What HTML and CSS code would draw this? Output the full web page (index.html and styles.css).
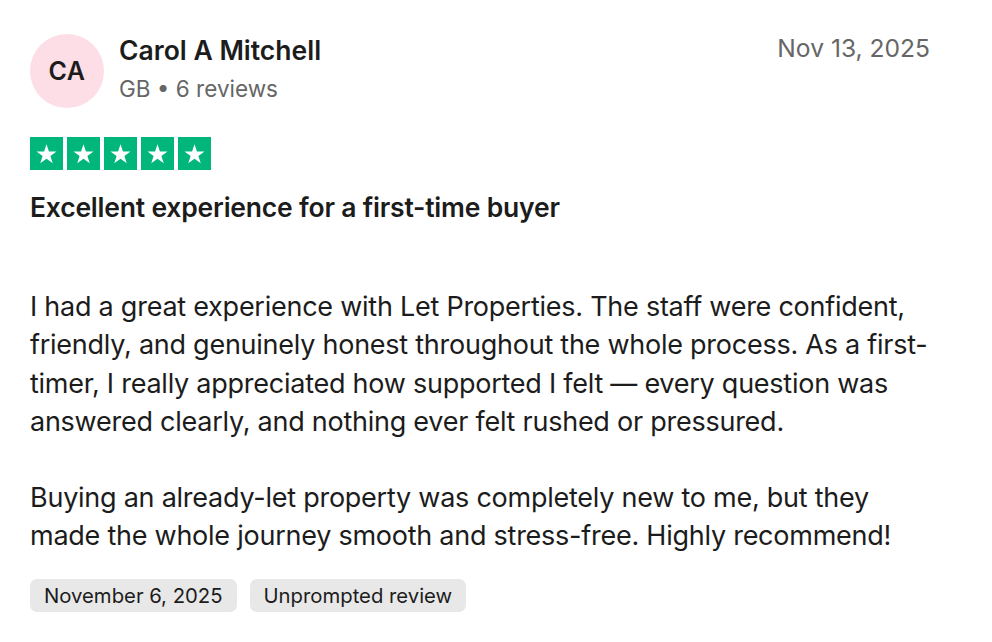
FILE: index.html
```html
<!DOCTYPE html>
<html lang="en">
<head>
<meta charset="utf-8">
<link rel="stylesheet" href="styles.css">
</head>
<body>
<article class="review">
  <header class="head">
    <div class="author">
      <div class="avatar">CA</div>
      <div class="meta">
        <div class="name">Carol A Mitchell</div>
        <div class="sub">GB • 6 reviews</div>
      </div>
    </div>
    <div class="date">Nov 13, 2025</div>
  </header>
  <div class="stars">
    <span class="star"><svg viewBox="0 0 24 24"><path d="M12 3.2l2.35 6.9h7.3l-5.9 4.3 2.25 6.9L12 17l-5.99 4.3 2.25-6.9-5.9-4.3h7.3z" fill="#fff"/></svg></span>
    <span class="star"><svg viewBox="0 0 24 24"><path d="M12 3.2l2.35 6.9h7.3l-5.9 4.3 2.25 6.9L12 17l-5.99 4.3 2.25-6.9-5.9-4.3h7.3z" fill="#fff"/></svg></span>
    <span class="star"><svg viewBox="0 0 24 24"><path d="M12 3.2l2.35 6.9h7.3l-5.9 4.3 2.25 6.9L12 17l-5.99 4.3 2.25-6.9-5.9-4.3h7.3z" fill="#fff"/></svg></span>
    <span class="star"><svg viewBox="0 0 24 24"><path d="M12 3.2l2.35 6.9h7.3l-5.9 4.3 2.25 6.9L12 17l-5.99 4.3 2.25-6.9-5.9-4.3h7.3z" fill="#fff"/></svg></span>
    <span class="star"><svg viewBox="0 0 24 24"><path d="M12 3.2l2.35 6.9h7.3l-5.9 4.3 2.25 6.9L12 17l-5.99 4.3 2.25-6.9-5.9-4.3h7.3z" fill="#fff"/></svg></span>
  </div>
  <h2 class="title">Excellent experience for a first-time buyer</h2>
  <div class="body">
    <p>I had a great experience with Let Properties. The staff were confident, friendly, and genuinely honest throughout the whole process. As a first-timer, I really appreciated how supported I felt — every question was answered clearly, and nothing ever felt rushed or pressured.</p>
    <p>Buying an already-let property was completely new to me, but they made the whole journey smooth and stress-free. Highly recommend!</p>
  </div>
  <div class="tags">
    <span class="tag">November 6, 2025</span>
    <span class="tag">Unprompted review</span>
  </div>
</article>
</body>
</html>
```

FILE: styles.css
```css
* { box-sizing: border-box; }
html, body { margin: 0; background: #fff; }
body {
  font-family: Inter, "Noto Sans", sans-serif;
  color: #1c1c1c;
  padding: 34px 52px 0 30px;
}
.review { width: 910px; }
.head {
  display: flex;
  justify-content: space-between;
  align-items: flex-start;
}
.author { display: flex; align-items: center; gap: 15px; }
.avatar {
  width: 74px; height: 74px;
  border-radius: 50%;
  background: #fddde6;
  display: flex; align-items: center; justify-content: center;
  font-size: 25px; font-weight: 600; color: #1c1c1c;
  letter-spacing: 0.5px;
}
.meta { display: flex; flex-direction: column; gap: 8px; margin-top: -4px; }
.name { font-size: 26.5px; font-weight: 600; line-height: 32px; }
.sub { font-size: 22.5px; color: #666; line-height: 30px; }
.date { font-size: 24.6px; color: #666; line-height: 30px; margin: -1px 10px 0 0; }
.stars { display: flex; gap: 4px; margin-top: 29px; }
.star {
  width: 33px; height: 33px; background: #00b67a;
  display: flex; align-items: center; justify-content: center;
}
.star svg { width: 25px; height: 25px; }
.title {
  margin: 21px 0 0;
  font-size: 26.5px; font-weight: 600; line-height: 32px;
  letter-spacing: -0.2px;
}
.body { margin-top: 65px; }
.body p {
  margin: 0 0 37.5px;
  font-size: 27px; line-height: 38.3px;
  letter-spacing: -0.25px;
}
.body p:last-child { margin-bottom: 0; }
.tags { display: flex; gap: 13px; margin-top: 24px; }
.tag {
  background: #e8e8e8;
  border-radius: 7px;
  padding: 0 14px;
  height: 33px; line-height: 33px;
  font-size: 20.3px; color: #1c1c1c;
}
```
